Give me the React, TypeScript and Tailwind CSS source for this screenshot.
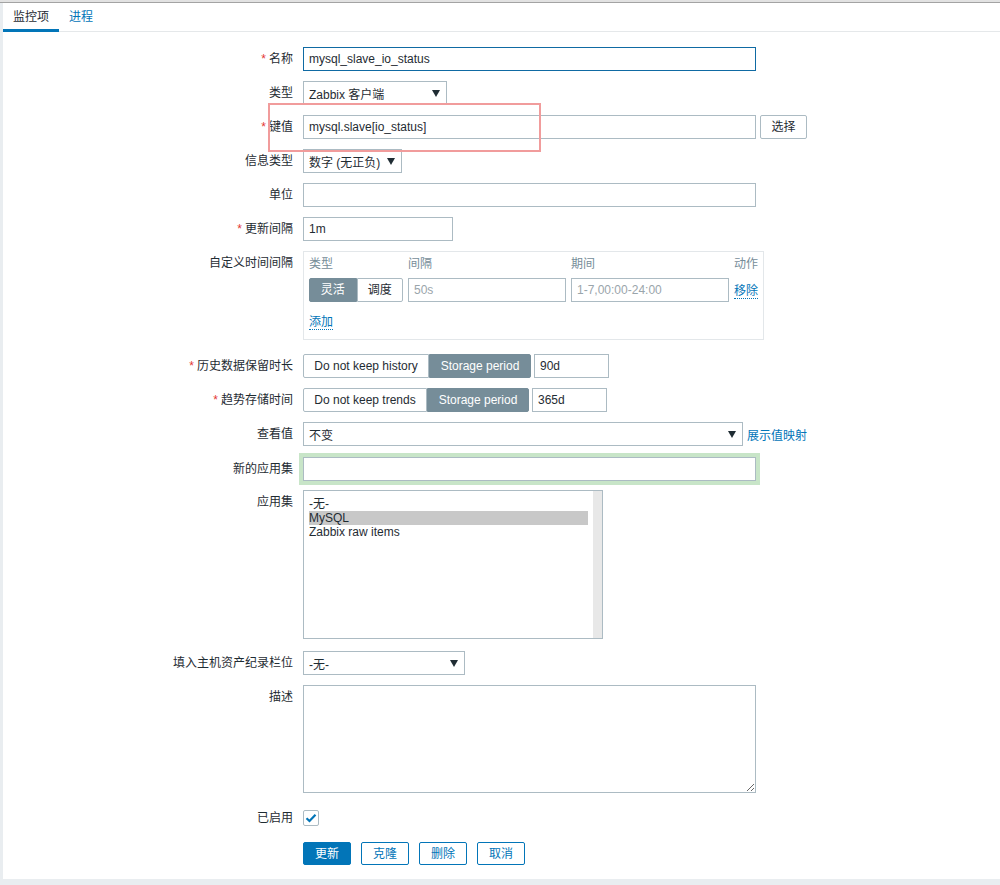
import React from 'react'

const FONT = "font-['Liberation_Sans','Noto_Sans_CJK_SC',sans-serif]"

function Label({ text, req = false }: { text: string; req?: boolean }) {
  return (
    <div className="w-[290px] shrink-0 text-right leading-[24px]">
      {req && <span className="text-[#e33734] mr-[3px]">*</span>}
      {text}
    </div>
  )
}

function Row({ label, req, className = '', children }: { label: string; req?: boolean; className?: string; children: React.ReactNode }) {
  return (
    <div className={`flex gap-[10px] ${className}`}>
      <Label text={label} req={req} />
      <div className="flex items-start">{children}</div>
    </div>
  )
}

function TextBox({ w, value = '', focus = false, placeholder = false }: { w: string; value?: string; focus?: boolean; placeholder?: boolean }) {
  return (
    <div
      className={`h-[24px] ${w} border ${focus ? 'border-[#0f6aa3]' : 'border-[#acbbc3]'} bg-white px-[5px] leading-[22px] whitespace-nowrap ${placeholder ? 'text-[#9aa5ab]' : ''}`}
    >
      {value}
    </div>
  )
}

function Caret() {
  return (
    <svg width="8" height="7" viewBox="0 0 8 7" className="shrink-0">
      <polygon points="0,0 8,0 4,7" fill="#1f2c33" />
    </svg>
  )
}

function Select({ w, value }: { w: string; value: string }) {
  return (
    <div className={`h-[24px] ${w} border border-[#acbbc3] bg-white pl-[5px] pr-[6px] flex items-center justify-between whitespace-nowrap`}>
      <span className="relative top-[2px] leading-[14px]">{value}</span>
      <Caret />
    </div>
  )
}

function Segmented({ items, active, widths }: { items: string[]; active: number; widths: string[] }) {
  return (
    <div className="flex h-[24px]">
      {items.map((it, i) => (
        <div
          key={it}
          className={`${widths[i]} h-[24px] flex items-center justify-center whitespace-nowrap border ${
            i === active ? 'bg-[#768d99] border-[#768d99] text-white' : 'bg-white border-[#acbbc3] text-[#1f2c33]'
          } ${i === 0 ? 'rounded-l-[2px]' : ''} ${i === items.length - 1 ? 'rounded-r-[2px]' : ''}`}
        >
          {it}
        </div>
      ))}
    </div>
  )
}

function Btn({ text, primary = false }: { text: string; primary?: boolean }) {
  return (
    <div
      className={`w-[48px] h-[23px] rounded-[2px] border border-[#0275b8] flex items-center justify-center ${
        primary ? 'bg-[#0275b8] text-white' : 'bg-white text-[#0275b8]'
      }`}
    >
      {text}
    </div>
  )
}

export default function App() {
  return (
    <div className={`${FONT} text-[12px] text-[#1f2c33] h-[885px] w-[1000px] bg-[#e9edf0] flex flex-col overflow-hidden`}>
      <div className="h-[2px] bg-[#e2e2e2] shrink-0" />
      <div className="h-px bg-[#a3a3a3] shrink-0" />
      <div className="flex-1 flex pl-[3px] pb-[6px]">
        <div className="flex-1 bg-white relative">
          {/* tabs */}
          <div className="flex h-[29px] border-b border-[#e5e8ea]">
            <div className="w-[56px] pl-[10px] flex items-center border-b-[3px] border-[#0275b8] -mb-px pt-[2px]">监控项</div>
            <div className="pl-[10px] flex items-center text-[#0275b8] pb-[1px]">进程</div>
          </div>

          <div className="flex flex-col pt-[15px]">
            <Row label="名称" req>
              <TextBox w="w-[453px]" value="mysql_slave_io_status" focus />
            </Row>
            <Row label="类型" className="mt-[10px]">
              <Select w="w-[144px]" value="Zabbix 客户端" />
            </Row>
            <Row label="键值" req className="mt-[10px]">
              <TextBox w="w-[453px]" value="mysql.slave[io_status]" />
              <div className="ml-[4px] w-[47px] h-[24px] border border-[#acbbc3] rounded-[2px] flex items-center justify-center">选择</div>
            </Row>
            <Row label="信息类型" className="mt-[10px]">
              <Select w="w-[99px]" value="数字 (无正负)" />
            </Row>
            <Row label="单位" className="mt-[10px]">
              <TextBox w="w-[453px]" />
            </Row>
            <Row label="更新间隔" req className="mt-[10px]">
              <TextBox w="w-[150px]" value="1m" />
            </Row>
            <Row label="自定义时间间隔" className="mt-[10px]">
              <div className="w-[461px] h-[89px] border border-[#e3e7ea] pt-[6px] pl-[5px]">
                <div className="grid grid-cols-[94px_158px_158px_auto] gap-x-[5px] text-[#768d99] leading-[12px]">
                  <div>类型</div>
                  <div>间隔</div>
                  <div>期间</div>
                  <div>动作</div>
                </div>
                <div className="grid grid-cols-[94px_158px_158px_auto] gap-x-[5px] mt-[8px] items-center">
                  <Segmented items={['灵活', '调度']} active={0} widths={['w-[48px]', 'w-[47px]']} />
                  <TextBox w="w-[158px]" value="50s" placeholder />
                  <TextBox w="w-[158px]" value="1-7,00:00-24:00" placeholder />
                  <span className="text-[#0275b8] border-b border-dotted border-[#0275b8] leading-[14px] self-center justify-self-start relative top-px">移除</span>
                </div>
                <div className="mt-[13px] leading-[14px]">
                  <span className="text-[#0275b8] border-b border-dotted border-[#0275b8]">添加</span>
                </div>
              </div>
            </Row>
            <Row label="历史数据保留时长" req className="mt-[14px]">
              <Segmented items={['Do not keep history', 'Storage period']} active={1} widths={['w-[126px]', 'w-[102px]']} />
              <div className="ml-[3px]">
                <TextBox w="w-[75px]" value="90d" />
              </div>
            </Row>
            <Row label="趋势存储时间" req className="mt-[10px]">
              <Segmented items={['Do not keep trends', 'Storage period']} active={1} widths={['w-[124px]', 'w-[102px]']} />
              <div className="ml-[3px]">
                <TextBox w="w-[75px]" value="365d" />
              </div>
            </Row>
            <Row label="查看值" className="mt-[10px]">
              <Select w="w-[440px]" value="不变" />
              <span className="ml-[4px] text-[#0275b8] leading-[24px] relative top-[2px]">展示值映射</span>
            </Row>
            <Row label="新的应用集" className="mt-[11px]">
              <div className="shadow-[0_0_0_4px_#c8e5c8]">
                <TextBox w="w-[453px]" />
              </div>
            </Row>
            <Row label="应用集" className="mt-[9px]">
              <div className="w-[300px] h-[149px] border border-[#acbbc3] flex">
                <div className="flex-1 pl-[5px] pr-[5px] pt-[6px] leading-[14px]">
                  <div>-无-</div>
                  <div className="bg-[#c8c8c8]">MySQL</div>
                  <div>Zabbix raw items</div>
                </div>
                <div className="w-[9px] bg-[#e8e8e8]" />
              </div>
            </Row>
            <Row label="填入主机资产纪录栏位" className="mt-[12px]">
              <Select w="w-[162px]" value="-无-" />
            </Row>
            <Row label="描述" className="mt-[10px]">
              <textarea
                readOnly
                className="w-[453px] h-[108px] border border-[#acbbc3] bg-white outline-none block"
              />
            </Row>
            <Row label="已启用" className="mt-[13px]">
              <div className="h-[24px] flex items-center">
                <div className="w-[16px] h-[16px] border border-[#acbbc3] rounded-[2px] bg-white flex items-center justify-center">
                  <svg width="12" height="10" viewBox="0 0 12 10">
                    <path d="M1.5 5.2 L4.5 8 L10.5 1.8" fill="none" stroke="#0275b8" strokeWidth="2.2" />
                  </svg>
                </div>
              </div>
            </Row>
            <div className="flex gap-[10px] mt-[12px]">
              <div className="w-[290px] shrink-0" />
              <div className="flex gap-[10px]">
                <Btn text="更新" primary />
                <Btn text="克隆" />
                <Btn text="删除" />
                <Btn text="取消" />
              </div>
            </div>
          </div>

          {/* annotation box */}
          <div className="absolute left-[265px] top-[100px] w-[273px] h-[49px] border-2 border-[#f19c9c] pointer-events-none" />
        </div>
      </div>
    </div>
  )
}
